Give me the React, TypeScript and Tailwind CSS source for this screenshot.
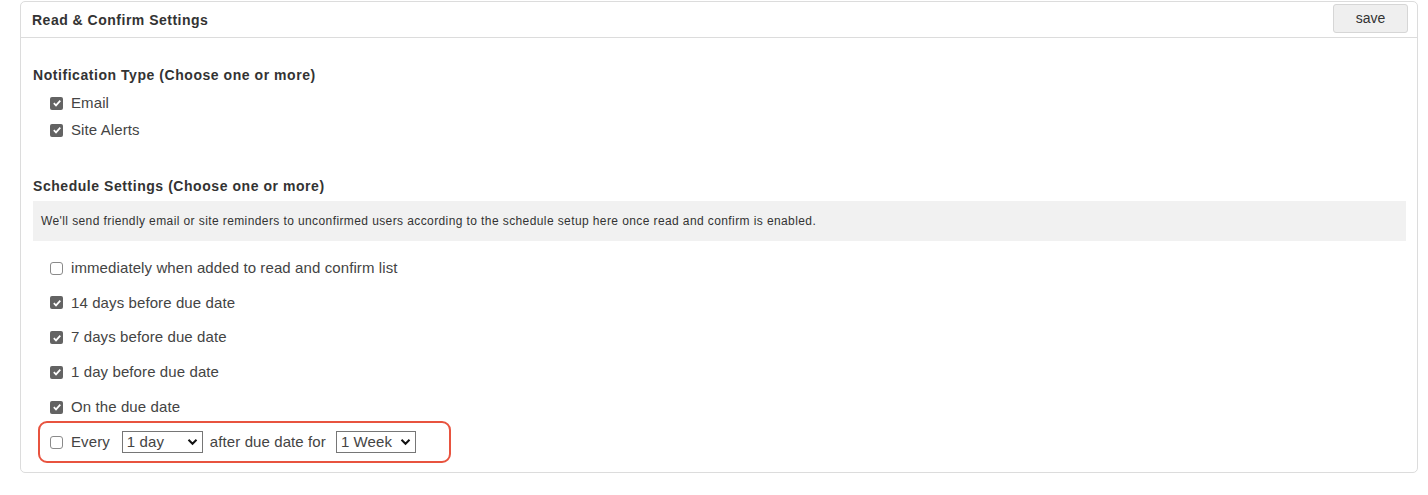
import React from "react";

function Check({ checked }: { checked: boolean }) {
  if (checked) {
    return (
      <span className="inline-flex h-[13px] w-[13px] shrink-0 items-center justify-center rounded-[2px] bg-[#636363]">
        <svg width="10" height="10" viewBox="0 0 10 10">
          <path d="M1.8 5.2 L4 7.4 L8.3 2.6" fill="none" stroke="#fff" strokeWidth="1.7" />
        </svg>
      </span>
    );
  }
  return <span className="inline-block h-[13px] w-[13px] shrink-0 rounded-[3px] border border-[#8a8a8a] bg-white" />;
}

function Select({ value, width }: { value: string; width: string }) {
  return (
    <span className={`inline-flex h-[22px] items-center justify-between border border-[#767676] bg-white pl-[4px] pr-[4px] ${width}`}>
      <span>{value}</span>
      <svg width="11" height="8" viewBox="0 0 11 8">
        <path d="M1.5 1.8 L5.5 5.8 L9.5 1.8" fill="none" stroke="#111" strokeWidth="2" />
      </svg>
    </span>
  );
}

export default function App() {
  const rows: [boolean, string][] = [
    [false, "immediately when added to read and confirm list"],
    [true, "14 days before due date"],
    [true, "7 days before due date"],
    [true, "1 day before due date"],
    [true, "On the due date"],
  ];
  return (
    <div className="h-[495px] w-[1428px] bg-white pt-px" style={{ fontFamily: '"Liberation Sans", Arial, sans-serif' }}>
      <div className="ml-[20px] h-[472px] w-[1398px] rounded-[5px] border border-[#dcdcdc] text-[#333]">
        <div className="flex h-[36px] items-start justify-between border-b border-[#dcdcdc] pl-[11px] pr-[9px] pt-[2px]">
          <span className="self-center text-[14px] font-bold tracking-[0.5px]">Read &amp; Confirm Settings</span>
          <button className="h-[29px] w-[75px] rounded-[3px] border border-[#d6d6d6] bg-[#efefef] text-[14px] text-[#333]">save</button>
        </div>
        <div className="pl-[12px] pr-[11px] text-[#444]">
          <div className="mt-[27px] text-[14px] font-bold tracking-[0.55px] text-[#333]">Notification Type (Choose one or more)</div>
          <div className="mt-[8px] flex flex-col gap-[9px] pl-[17px] text-[15px] tracking-[0.1px]">
            <label className="flex h-[18px] items-center gap-[8px]"><Check checked /> <span>Email</span></label>
            <label className="flex h-[18px] items-center gap-[8px]"><Check checked /> <span>Site Alerts</span></label>
          </div>
          <div className="mt-[37px] text-[14px] font-bold tracking-[0.55px] text-[#333]">Schedule Settings (Choose one or more)</div>
          <div className="mt-[4px] flex h-[40px] items-center bg-[#f1f1f1] px-[8px] text-[12px] tracking-[0.4px] text-[#333]">
            We'll send friendly email or site reminders to unconfirmed users according to the schedule setup here once read and confirm is enabled.
          </div>
          <div className="mt-[18px] flex flex-col gap-[16.8px] pl-[17px] text-[15px] tracking-[0.1px]">
            {rows.map(([c, t]) => (
              <label key={t} className="flex h-[18px] items-center gap-[8px]"><Check checked={c} /> <span>{t}</span></label>
            ))}
          </div>
          <div className="mt-[5px] ml-[5px] flex h-[42px] w-[413px] items-center rounded-[9px] border-2 border-[#e8533f] pl-[10px] text-[15px] tracking-[0.1px]">
            <Check checked={false} />
            <span className="ml-[8px]">Every</span>
            <span className="ml-[12px]"><Select value="1 day" width="w-[81px]" /></span>
            <span className="ml-[7px]">after due date for</span>
            <span className="ml-[10px]"><Select value="1 Week" width="w-[80px]" /></span>
          </div>
        </div>
      </div>
    </div>
  );
}
